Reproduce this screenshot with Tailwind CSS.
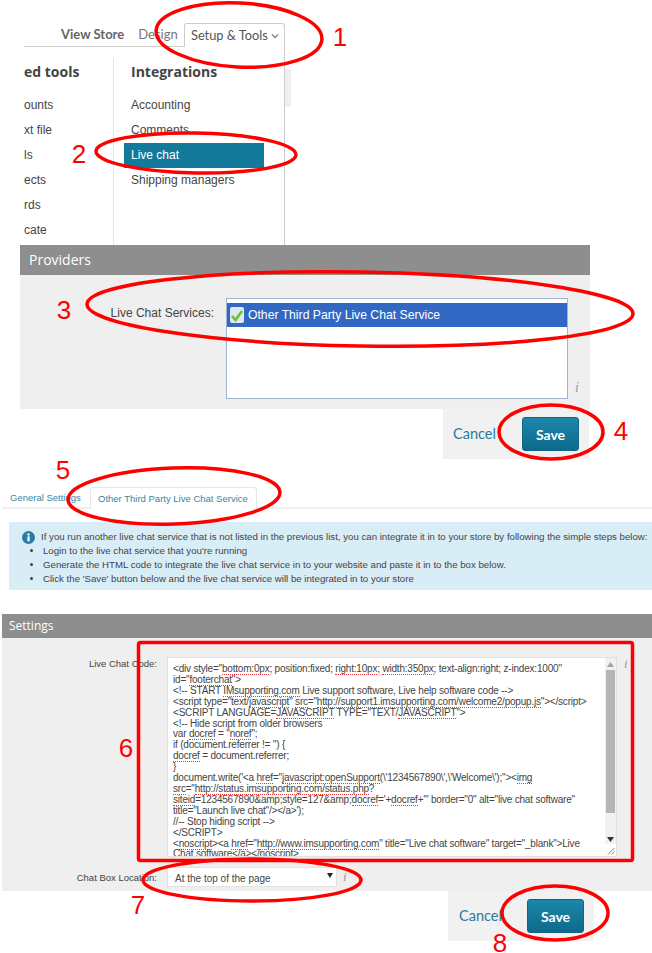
<!DOCTYPE html>
<html lang="en">
<head>
<meta charset="UTF-8">
<title>Live chat setup</title>
<script src="https://cdn.jsdelivr.net/npm/@tailwindcss/browser@4"></script>
</head>
<body class="bg-white">
<div class="relative w-[652px] h-[953px] overflow-hidden bg-white text-[#444] font-['Liberation_Sans',sans-serif]">

  <!-- store menu -->
  <div class="flex h-[245px] pl-[24px] overflow-hidden">
    <div class="w-[261px] flex flex-col">
      <div class="flex items-end h-[47px]">
        <div class="w-[160px] h-[24px] border-b border-[#ccc] flex items-center font-['Lato',sans-serif] text-[13px] text-[#666]">
          <span class="ml-[37px] font-bold">View Store</span>
          <span class="ml-[14px] text-[#777]">Design</span>
        </div>
        <div class="w-[101px] h-[24px] border border-b-0 border-[#ccc] rounded-t-[3px] flex items-center pl-[6px] font-['Lato',sans-serif] text-[12.800px] text-[#555]">
          Setup &amp; Tools
          <svg class="ml-[3px]" width="8" height="6" viewBox="0 0 8 6"><path d="M1 1.500 4 4.500 7 1.500" fill="none" stroke="#888" stroke-width="1.400"/></svg>
        </div>
      </div>
      <div class="flex flex-1 border-r border-[#ccc]">
        <div class="w-[90px] mt-[11px] border-r border-[#e5e5e5] text-[12px]">
          <div class="h-[35px] pt-[3px] font-['Open_Sans',sans-serif] font-bold text-[14px] text-[#444]">ed tools</div>
          <div class="h-[25px] leading-[25px]">ounts</div>
          <div class="h-[25px] leading-[25px]">xt file</div>
          <div class="h-[25px] leading-[25px]">ls</div>
          <div class="h-[25px] leading-[25px]">ects</div>
          <div class="h-[25px] leading-[25px]">rds</div>
          <div class="h-[25px] leading-[25px]">cate</div>
        </div>
        <div class="mt-[11px] pl-[10px] w-[150px] text-[12px]">
          <div class="h-[35px] pt-[3px] pl-[7px] font-['Open_Sans',sans-serif] font-bold text-[14px] text-[#444]">Integrations</div>
          <div class="h-[25px] leading-[25px] pl-[7px]">Accounting</div>
          <div class="h-[25px] leading-[25px] pl-[7px]">Comments</div>
          <div class="h-[25px] leading-[25px] pl-[7px] bg-[#147a9c] text-white">Live chat</div>
          <div class="h-[25px] leading-[25px] pl-[7px]">Shipping managers</div>
        </div>
      </div>
    </div>
    <div class="w-[6px] h-[38px] mt-[69px] bg-[#efefef]"></div>
  </div>

  <!-- providers -->
  <div class="ml-[20px] w-[570px] h-[164px] bg-[#efefef]">
    <div class="h-[30px] bg-[#8e8e8e] pl-[9px] leading-[29px] font-['Open_Sans',sans-serif] text-[14px] text-white">Providers</div>
    <div class="flex pt-[23px]">
      <div class="w-[194px] text-right text-[12px] leading-[14px] pt-[8px]">Live Chat Services:</div>
      <div class="ml-[12px] w-[342px] h-[101px] bg-white border border-[#9fb4d0] pt-[4px]">
        <div class="h-[24px] bg-[#3068c4] flex items-center pl-[3px] text-[12.200px] text-white">
          <span class="w-[14px] h-[16px] bg-[#dfe8f4] rounded-[2px] flex items-center justify-center mr-[4px]">
            <svg width="14" height="13" viewBox="0 0 14 13"><path d="M2 7 5.500 11 12 2" fill="none" stroke="#6cc02c" stroke-width="2.600"/></svg>
          </span>
          Other Third Party Live Chat Service
        </div>
      </div>
      <div class="ml-[7px] pt-[82px] font-['Liberation_Serif',serif] italic text-[14px] leading-[16px] text-[#999]">i</div>
    </div>
  </div>
  <div class="ml-[443px] w-[146px] h-[50px] bg-[#f1f1f1] flex items-center pl-[10px]">
    <span class="w-[69px] font-['Lato',sans-serif] text-[14.500px] text-[#2a7a9c]">Cancel</span>
    <button class="w-[57px] h-[34px] rounded-[3px] border border-[#0e6585] bg-linear-to-b from-[#1a88aa] to-[#0f6a8c] text-white font-['Lato',sans-serif] font-bold text-[14px]">Save</button>
  </div>

  <!-- tabs -->
  <div class="mt-[28px] ml-[2px] h-[22px] border-b-2 border-[#efefef] flex items-end text-[9.500px] text-[#3a85a3]">
    <span class="ml-[8px] w-[80px] h-[20px] leading-[22px]">General Settings</span>
    <span class="h-[22px] -mb-[2px] w-[167px] bg-white border border-b-0 border-[#e6e6e6] rounded-t-[3px] pl-[7px] leading-[21px]">Other Third Party Live Chat Service</span>
  </div>

  <!-- info box -->
  <div class="mt-[13px] ml-[9px] h-[68px] bg-[#d9edf7] text-[9.670px] leading-[14px] text-[#444] pt-[8px]">
    <div class="flex items-center pl-[13px] whitespace-nowrap">
      <svg class="mr-[6px] shrink-0" width="13" height="13" viewBox="0 0 13 13"><circle cx="6.500" cy="6.500" r="6.500" fill="#2a7ba5"/><circle cx="6.500" cy="3.400" r="1.200" fill="#fff"/><rect x="5.400" y="5.400" width="2.300" height="5" fill="#fff"/></svg>
      If you run another live chat service that is not listed in the previous list, you can integrate it in to your store by following the simple steps below:
    </div>
    <ul class="list-disc pl-[34px] whitespace-nowrap">
      <li>Login to the live chat service that you're running</li>
      <li>Generate the HTML code to integrate the live chat service in to your website and paste it in to the box below.</li>
      <li>Click the 'Save' button below and the live chat service will be integrated in to your store</li>
    </ul>
  </div>

  <!-- settings -->
  <div class="mt-[24px] ml-[2px] h-[277px] bg-[#efefef]">
    <div class="h-[24px] bg-[#8e8e8e] pl-[7px] leading-[24px] font-['Open_Sans',sans-serif] text-[12px] text-white">Settings</div>
    <div class="flex pt-[19px]">
      <div class="w-[155px] text-right text-[9.500px] leading-[14px] text-[#444]">Live Chat Code:</div>
      <div class="ml-[10px] w-[450px] h-[200px] bg-white border border-[#e2e2e2] flex overflow-hidden">
        <div class="flex-1 min-w-0 overflow-hidden pl-[5px] pt-[6px] text-[10px] tracking-[-0.2px] leading-[10.900px] text-[#444] whitespace-nowrap">
          &lt;div style="<span class="border-b border-dotted border-[#e33]">bottom:0px</span>; position:fixed; <span class="border-b border-dotted border-[#e33]">right:10px</span>; <span class="border-b border-dotted border-[#e33]">width:350px</span>; text-align:right; z-index:1000"<br>
          id="<span class="border-b border-dotted border-[#e33]">footerchat</span>"&gt;<br>
          &lt;!-- START <span class="border-b border-dotted border-[#e33]">IMsupporting.com</span> Live support software, Live help software code --&gt;<br>
          &lt;script type="text/<span class="border-b border-dotted border-[#e33]">javascript</span>" <span class="border-b border-dotted border-[#e33]">src</span>="<span class="border-b border-dotted border-[#e33]">http://support1.imsupporting.com/welcome2/popup.js</span>"&gt;&lt;/script&gt;<br>
          &lt;SCRIPT LANGUAGE=<span class="border-b border-dotted border-[#e33]">JAVASCRIPT</span> TYPE="TEXT/<span class="border-b border-dotted border-[#e33]">JAVASCRIPT</span>"&gt;<br>
          &lt;!-- Hide script from older browsers<br>
          var <span class="border-b border-dotted border-[#e33]">docref</span> = "<span class="border-b border-dotted border-[#e33]">noref</span>";<br>
          if (document.referrer != '') {<br>
          <span class="border-b border-dotted border-[#e33]">docref</span> = document.referrer;<br>
          }<br>
          document.write('&lt;a <span class="border-b border-dotted border-[#e33]">href</span>="<span class="border-b border-dotted border-[#e33]">javascript:openSupport</span>(\'1234567890\',\'Welcome\');"&gt;&lt;<span class="border-b border-dotted border-[#e33]">img</span><br>
          <span class="border-b border-dotted border-[#e33]">src</span>="<span class="border-b border-dotted border-[#e33]">http://status.imsupporting.com/status.php</span>?<br>
          <span class="border-b border-dotted border-[#e33]">siteid</span>=1234567890&amp;amp;style=127&amp;amp;<span class="border-b border-dotted border-[#e33]">docref</span>='+<span class="border-b border-dotted border-[#e33]">docref</span>+'" border="0" alt="live chat software"<br>
          title="Launch live chat"/&gt;&lt;/a&gt;');<br>
          //-- Stop hiding script --&gt;<br>
          &lt;/SCRIPT&gt;<br>
          &lt;<span class="border-b border-dotted border-[#e33]">noscript</span>&gt;&lt;a <span class="border-b border-dotted border-[#e33]">href</span>="<span class="border-b border-dotted border-[#e33]">http://www.imsupporting.com</span>" title="Live chat software" target="_blank"&gt;Live<br>
          Chat software&lt;/a&gt;&lt;/<span class="border-b border-dotted border-[#e33]">noscript</span>&gt;
        </div>
        <div class="w-[11px] shrink-0 bg-[#f1f1f1] flex flex-col items-center">
          <svg class="mt-[4px] shrink-0" width="7" height="5" viewBox="0 0 7 5"><path d="M3.500 0 7 5H0z" fill="#a3a3a3"/></svg>
          <div class="w-[9px] h-[143px] mt-[3px] bg-[#b5b5b5]"></div>
          <svg class="mt-[24px] shrink-0" width="7" height="5" viewBox="0 0 7 5"><path d="M0 0H7L3.500 5z" fill="#333"/></svg>
          <div class="w-[11px] mt-auto h-[12px] bg-white">
            <svg width="11" height="12" viewBox="0 0 11 12"><path d="M3 10.500 9.500 4M6.500 10.500 9.500 7.500" stroke="#888" stroke-width="1"/></svg>
          </div>
        </div>
      </div>
      <div class="ml-[7px] font-['Liberation_Serif',serif] italic text-[13px] leading-[13px] text-[#999]">i</div>
    </div>
    <div class="flex items-center mt-[10px]">
      <div class="w-[155px] pt-[2px] text-right text-[9.500px] text-[#444]">Chat Box Location:</div>
      <div class="ml-[10px] w-[170px] h-[20px] bg-white border border-[#e2e2e2] flex items-center pl-[7px] pt-[2px] text-[10px] text-[#444]">
        At the top of the page
        <svg class="ml-auto mr-[3px] mb-[5px]" width="6" height="5" viewBox="0 0 6 5"><path d="M0 0H6L3 5z" fill="#222"/></svg>
      </div>
      <div class="ml-[6px] font-['Liberation_Serif',serif] italic text-[13px] text-[#999]">i</div>
    </div>
  </div>
  <div class="ml-[448px] w-[146px] h-[50px] bg-[#f1f1f1] flex items-center pl-[11px]">
    <span class="w-[68px] font-['Lato',sans-serif] text-[14.500px] text-[#2a7a9c]">Cancel</span>
    <button class="w-[57px] h-[34px] rounded-[3px] border border-[#0e6585] bg-linear-to-b from-[#1a88aa] to-[#0f6a8c] text-white font-['Lato',sans-serif] font-bold text-[14px]">Save</button>
  </div>

  <!-- red annotations drawn over the screenshot -->
  <svg class="absolute inset-0" width="652" height="953" viewBox="0 0 652 953">
    <g fill="none" stroke="#f00" stroke-width="3.500">
      <ellipse cx="239" cy="35" rx="83" ry="32" transform="rotate(3 239 35)"/>
      <ellipse cx="196" cy="153" rx="100" ry="20" transform="rotate(1 196 153)"/>
      <ellipse cx="360" cy="309" rx="273" ry="37" transform="rotate(1 360 309)"/>
      <ellipse cx="551" cy="432" rx="52" ry="27"/>
      <ellipse cx="174" cy="496" rx="106" ry="28" transform="rotate(-2 174 496)"/>
      <rect x="138.500" y="642.500" width="494" height="218" rx="2"/>
      <ellipse cx="252" cy="880" rx="109" ry="21"/>
      <ellipse cx="555" cy="913" rx="53" ry="27"/>
    </g>
    <g fill="#f00" font-family="Liberation Sans, sans-serif" font-size="26" text-anchor="middle">
      <text x="340" y="46">1</text>
      <text x="79" y="163">2</text>
      <text x="64" y="319">3</text>
      <text x="621" y="440">4</text>
      <text x="63" y="479">5</text>
      <text x="126" y="757">6</text>
      <text x="138" y="914">7</text>
      <text x="500" y="952">8</text>
    </g>
  </svg>
</div>
</body>
</html>
